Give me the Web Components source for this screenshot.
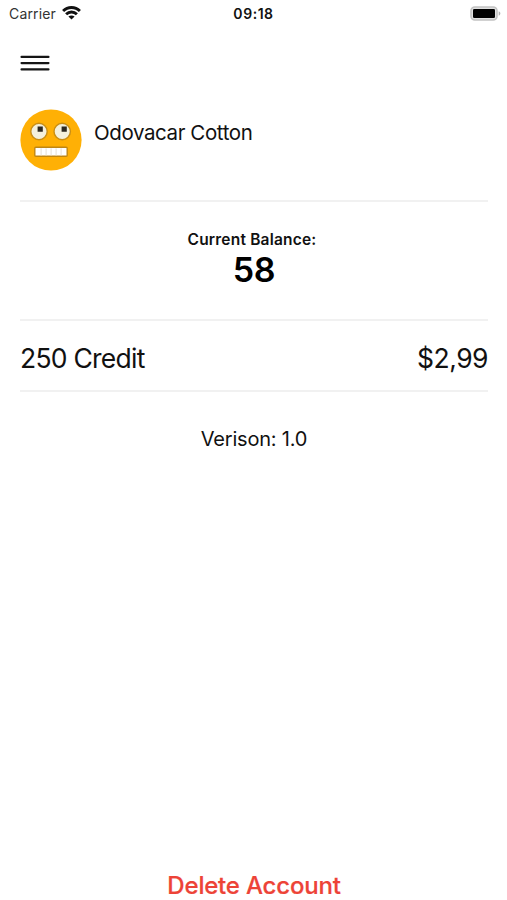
<!DOCTYPE html>
<html lang="en">
<head>
<meta charset="utf-8">
<title>Account</title>
<style>
html,body{margin:0;height:100%;background:#fff}
body{font-family:Inter,"Liberation Sans",sans-serif;color:#111;overflow:hidden}
</style>
</head>
<body>
<account-screen></account-screen>
<script>
const define=(name,html)=>customElements.define(name,class extends HTMLElement{
  constructor(){super();this.attachShadow({mode:'open'}).innerHTML=html;}
});

define('status-bar',`<style>
:host{display:grid;grid-template-columns:1fr auto 1fr;align-items:center;height:27px;padding:0 6px 0 9px;box-sizing:border-box}
.left{display:flex;align-items:center;gap:6px}
.carrier{font-size:14px;line-height:27px;letter-spacing:.15px;color:#333}
.time{font-size:14px;line-height:27px;font-weight:600;letter-spacing:.55px;margin-right:3px}
.battery{justify-self:end}
svg{display:block}
.left svg{margin-bottom:1px}
</style>
<div class="left"><span class="carrier"><slot name="carrier"></slot></span>
<svg width="19" height="14" viewBox="0 0 19 14" fill="none" stroke="#111" stroke-width="2.9"><path d="M1.1 5.1C5.8.3 13.2.3 17.9 5.1M4.1 8.3c3.1-3 7.7-3 10.8 0"/><path d="M6.4 10.6c1.7-1.6 4.5-1.6 6.2 0L9.5 13.6z" fill="#111" stroke="none"/></svg></div>
<span class="time"><slot name="time"></slot></span>
<svg class="battery" width="31" height="15" viewBox="0 0 31 15"><rect x="1" y="1" width="26" height="13" rx="3.8" fill="#e0e0e0" stroke="#c2c2c2" stroke-width="1.6"/><rect x="3" y="3" width="22" height="9" rx="1.3" fill="#000"/><path d="M28.7 5.3c2.2.8 2.2 3.6 0 4.4z" fill="#b0b0b0"/></svg>`);

define('menu-button',`<style>:host{display:block;width:30px;height:16px}svg{display:block}</style>
<svg width="30" height="16" viewBox="0 0 30 16" stroke="#151515" stroke-width="2.1" stroke-linecap="round"><path d="M1.5 1.9h27M1.5 8.1h27M1.5 14.4h27"/></svg>`);

define('face-avatar',`<style>:host{display:block;width:62px;height:62px}svg{display:block}</style>
<svg width="62" height="62" viewBox="0 0 62 62"><circle cx="31" cy="31" r="30.6" fill="#ffb005"/>
<g fill="#f4f0dc" stroke="#c98e14" stroke-width="1.4"><circle cx="19" cy="22.5" r="8.2"/><circle cx="42.2" cy="22.5" r="8.2"/></g>
<path d="M17.6 17.4h5.2v5.4h-5.2zM41.6 17.4h5.2v5.4h-5.2z" fill="#2d2921"/>
<rect x="14.8" y="38.3" width="32.4" height="9" rx="1" fill="#fff" stroke="#c08612" stroke-width="1.4"/>
<path d="M21.1 39.3v7.2M26.1 39.3v7.2M31.1 39.3v7.2M36.1 39.3v7.2M41.1 39.3v7.2" stroke="#e5dfd3"/></svg>`);

define('profile-header',`<style>
:host{display:flex;gap:12px;height:93px;box-sizing:border-box;border-bottom:2px solid #f1f1f1}
.name{font-size:20.5px;line-height:24px;padding-top:12px;letter-spacing:-.4px;white-space:nowrap}
</style><face-avatar></face-avatar><span class="name"><slot></slot></span>`);

define('balance-panel',`<style>
:host{display:flex;flex-direction:column;align-items:center;height:119px;box-sizing:border-box;padding-top:28px;border-bottom:2px solid #f1f1f1}
.label{font-size:15.5px;line-height:20px;font-weight:600;letter-spacing:.2px;margin-right:4px}
.value{font-size:34px;line-height:40px;font-weight:600;color:#000;letter-spacing:-.3px}
</style><span class="label"><slot name="label"></slot></span><span class="value"><slot name="value"></slot></span>`);

define('credit-row',`<style>
:host{display:flex;justify-content:space-between;height:71px;box-sizing:border-box;padding-top:21px;border-bottom:2px solid #f1f1f1;font-size:26.5px;line-height:32px}
.n{letter-spacing:-.75px}.p{letter-spacing:-.5px}
</style><span class="n"><slot name="name"></slot></span><span class="p"><slot name="price"></slot></span>`);

define('account-screen',`<style>
:host{display:flex;flex-direction:column;height:900px}
main{flex:1;display:flex;flex-direction:column;padding:28px 19px 0 20px}
profile-header{margin-top:38px}
.version{align-self:center;font-size:20px;line-height:24px;margin-top:35px;letter-spacing:-.2px}
.delete{margin:auto 0 -1px;align-self:center;border:0;background:none;padding:0;font:500 24px/30px Inter,"Liberation Sans",sans-serif;color:#ed4337;-webkit-text-stroke:.2px #ed4337;letter-spacing:-.2px}
</style>
<status-bar><span slot="carrier">Carrier</span><span slot="time">09:18</span></status-bar>
<main><menu-button></menu-button>
<profile-header><span>Odovacar Cotton</span></profile-header>
<balance-panel><span slot="label">Current Balance:</span><span slot="value">58</span></balance-panel>
<credit-row><span slot="name">250 Credit</span><span slot="price">$2,99</span></credit-row>
<span class="version">Verison: 1.0</span>
<button class="delete">Delete Account</button></main>`);
</script>
</body>
</html>
